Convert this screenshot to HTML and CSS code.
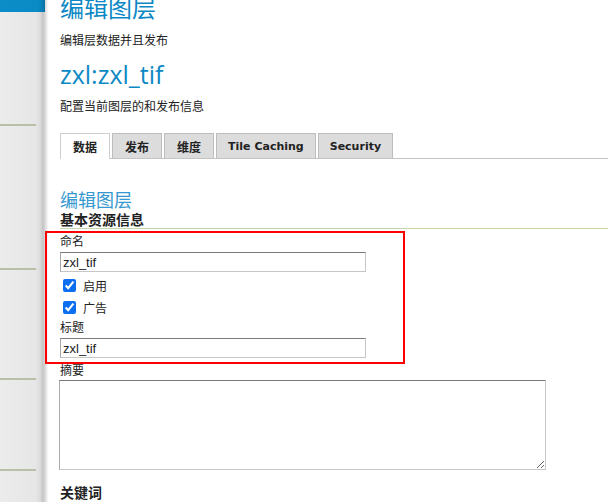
FILE: index.html
```html
<!DOCTYPE html>
<html lang="zh">
<head>
<meta charset="utf-8">
<title>编辑图层</title>
<link rel="stylesheet" href="styles.css">
</head>
<body>
<div class="page">
  <aside class="sidebar">
    <div class="sidebar-top"></div>
    <div class="side-item side-item-1"></div>
    <div class="side-item side-item-2"></div>
    <div class="side-item side-item-3"></div>
    <div class="side-item side-item-4"></div>
  </aside>
  <main class="main">
    <h1 class="page-title">编辑图层</h1>
    <p class="page-sub">编辑层数据并且发布</p>
    <h1 class="layer-title">zxl:zxl_tif</h1>
    <p class="layer-desc">配置当前图层的和发布信息</p>
    <ul class="tabs">
      <li class="tab tab-cjk active">数据</li>
      <li class="tab tab-cjk">发布</li>
      <li class="tab tab-cjk">维度</li>
      <li class="tab">Tile Caching</li>
      <li class="tab">Security</li>
    </ul>
    <h2 class="section-title">编辑图层</h2>
    <h3 class="group-title">基本资源信息</h3>
    <label class="field-label">命名</label>
    <input class="text-input" type="text" value="zxl_tif">
    <label class="check-row"><input type="checkbox" checked><span>启用</span></label>
    <label class="check-row second"><input type="checkbox" checked><span>广告</span></label>
    <label class="field-label label-title">标题</label>
    <input class="text-input" type="text" value="zxl_tif">
    <label class="field-label label-abstract">摘要</label>
    <textarea class="text-area"></textarea>
    <h3 class="keywords">关键词</h3>
  </main>
  <div class="highlight"></div>
</div>
</body>
</html>
```

FILE: styles.css
```css
html, body {
  margin: 0;
  padding: 0;
  background: #fff;
  overflow: hidden;
}
body {
  font-family: "Noto Sans CJK SC", "DejaVu Sans", sans-serif;
  color: #222;
}
.page {
  display: flex;
  position: relative;
  width: 608px;
  height: 502px;
  overflow: hidden;
}
.sidebar {
  width: 49px;
  flex: none;
  background: linear-gradient(to right, #ececec 0, #e6e6e6 36px, #dcdcdc 40px, #c4c4c4 43px, #e2e2e2 46px, #fafafa 48px, #fff 49px);
}
.sidebar-top {
  height: 12px;
  width: 45px;
  background: linear-gradient(to right, #0c8dc8 0, #0a8bc6 38px, #0878ad 44px, #0d6f9c 45px);
}
.side-item {
  width: 36px;
  border-bottom: 2px solid #b9c0a8;
  box-sizing: border-box;
}
.side-item-1 { height: 114px; }
.side-item-2 { height: 144px; }
.side-item-3 { height: 110px; }
.side-item-4 { height: 91px; }

.main {
  flex: 1;
  padding-left: 11px;
  display: flex;
  flex-direction: column;
  align-items: flex-start;
}
.page-title {
  margin: -7px 0 0;
  font-size: 24px;
  line-height: 28px;
  font-weight: 400;
  color: #0c88c4;
}
.page-sub {
  margin: 11px 0 0;
  font-size: 12px;
  line-height: 16px;
}
.layer-title {
  margin: 11px 0 0;
  font-family: "Open Sans", "Noto Sans CJK SC", sans-serif;
  font-size: 25px;
  line-height: 30px;
  font-weight: 400;
  color: #0c88c4;
}
.layer-desc {
  margin: 9px 0 0;
  font-size: 12px;
  line-height: 16px;
}
.tabs {
  list-style: none;
  margin: 19px 0 0;
  padding: 0;
  display: flex;
  gap: 2px;
  align-self: stretch;
  border-bottom: 1px solid #c4c4c4;
  height: 25px;
}
.tab {
  height: 25px;
  box-sizing: border-box;
  padding: 0 11px;
  display: flex;
  align-items: center;
  font-family: "DejaVu Sans", "Noto Sans CJK SC", sans-serif;
  font-size: 11px;
  font-weight: 700;
  color: #222;
  background: #dcdcdc;
  border: 1px solid #bdbdbd;
  border-bottom: none;
}
.tab-cjk {
  font-size: 12px;
  padding: 0 12px;
}
.tab.active {
  background: #fff;
  border-color: #cfcfcf;
  height: 26px;
  padding: 0 12px 1px;
}
.section-title {
  margin: 29px 0 0;
  font-size: 18px;
  line-height: 22px;
  font-weight: 400;
  color: #3598cf;
}
.group-title {
  margin: 0;
  font-size: 14px;
  line-height: 18px;
  font-weight: 700;
  align-self: stretch;
  border-bottom: 1px solid #c6d5a6;
}
.field-label {
  margin-top: 4px;
  font-size: 12px;
  line-height: 16px;
}
.text-input {
  margin: 3px 0 0;
  width: 306px;
  height: 20px;
  box-sizing: border-box;
  padding: 0 2px;
  border: 1px solid;
  border-color: #7a7a7a #c6c6c6 #c6c6c6 #a9a9a9;
  font-family: "Liberation Sans", sans-serif;
  font-size: 13px;
  color: #222;
  outline: none;
}
.check-row {
  margin-top: 4px;
  height: 18px;
  display: flex;
  align-items: center;
  font-size: 12px;
}
.check-row input {
  margin: 0 7px 0 3px;
  width: 13px;
  height: 13px;
  accent-color: #0b6ff0;
}
.label-title { margin-top: 3px; }
.label-abstract { margin-top: 4px; }
.text-area {
  margin: 2px 0 0 -1px;
  width: 487px;
  height: 90px;
  box-sizing: border-box;
  border: 1px solid;
  border-color: #7a7a7a #c6c6c6 #c6c6c6 #a9a9a9;
  resize: both;
}
.keywords {
  margin: 13px 0 0;
  font-size: 14px;
  line-height: 18px;
  font-weight: 700;
}
.highlight {
  position: absolute;
  left: 45px;
  top: 231px;
  width: 360px;
  height: 133px;
  box-sizing: border-box;
  border: 2px solid #ff0000;
  pointer-events: none;
}
```
